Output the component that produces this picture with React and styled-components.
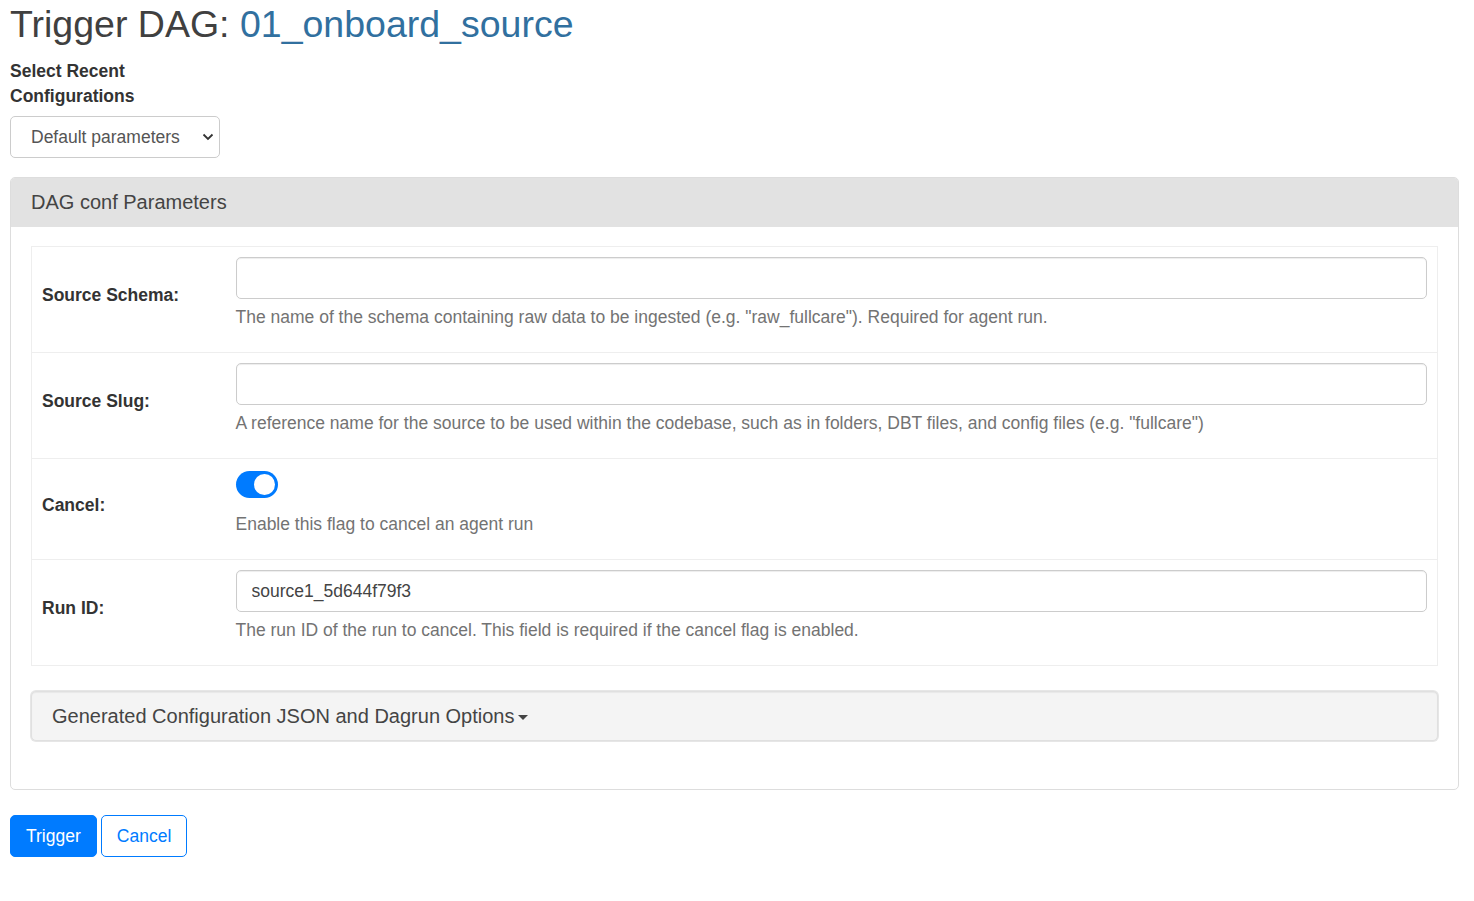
import React, { useState } from 'react'
import styled, { createGlobalStyle } from 'styled-components'

const GlobalStyle = createGlobalStyle`
  html, body {
    margin: 0;
    padding: 0;
    background: #fff;
  }
  body {
    font-family: "Liberation Sans", Arial, Helvetica, sans-serif;
    font-size: 17.5px;
    line-height: 25px;
    color: #333;
  }
  * { box-sizing: border-box; }
`

const params = [
  {
    id: 'source_schema',
    label: 'Source Schema:',
    kind: 'text',
    value: '',
    help: 'The name of the schema containing raw data to be ingested (e.g. "raw_fullcare"). Required for agent run.',
  },
  {
    id: 'source_slug',
    label: 'Source Slug:',
    kind: 'text',
    value: '',
    help: 'A reference name for the source to be used within the codebase, such as in folders, DBT files, and config files (e.g. "fullcare")',
  },
  {
    id: 'cancel',
    label: 'Cancel:',
    kind: 'switch',
    value: true,
    help: 'Enable this flag to cancel an agent run',
  },
  {
    id: 'run_id',
    label: 'Run ID:',
    kind: 'text',
    value: 'source1_5d644f79f3',
    help: 'The run ID of the run to cancel. This field is required if the cancel flag is enabled.',
  },
]

function Switch({ on, onToggle }) {
  return (
    <Toggle type="button" $on={on} onClick={onToggle} aria-pressed={on}>
      <Knob $on={on} />
    </Toggle>
  )
}

function ParamRow({ param }) {
  const [value, setValue] = useState(param.value)
  return (
    <tr>
      <LabelCell>
        <label htmlFor={param.id}>{param.label}</label>
      </LabelCell>
      <FieldCell>
        {param.kind === 'switch' ? (
          <Switch on={value} onToggle={() => setValue(!value)} />
        ) : (
          <TextInput id={param.id} value={value} onChange={e => setValue(e.target.value)} />
        )}
        <Help>{param.help}</Help>
      </FieldCell>
    </tr>
  )
}

export default function App() {
  return (
    <Page>
      <GlobalStyle />
      <Title>
        Trigger DAG: <DagName href="#">01_onboard_source</DagName>
      </Title>
      <RecentBox>
        <RecentLabel htmlFor="recent_configs">Select Recent Configurations</RecentLabel>
        <Select id="recent_configs" defaultValue="default">
          <option value="default">Default parameters</option>
        </Select>
      </RecentBox>

      <Panel>
        <PanelHeading>DAG conf Parameters</PanelHeading>
        <PanelBody>
          <ParamTable>
            <tbody>
              {params.map(p => (
                <ParamRow key={p.id} param={p} />
              ))}
            </tbody>
          </ParamTable>
          <Well>
            Generated Configuration JSON and Dagrun Options<Caret />
          </Well>
        </PanelBody>
      </Panel>

      <Actions>
        <Button $primary>Trigger</Button>
        <Button>Cancel</Button>
      </Actions>
    </Page>
  )
}

const Page = styled.div`
  padding: 0 15px 40px 10px;
`

const Title = styled.h2`
  margin: 0;
  padding-top: 4px;
  font-size: 37.5px;
  font-weight: 400;
  line-height: 41px;
  color: #404040;
`

const DagName = styled.a`
  color: #31709f;
  text-decoration: none;
`

const RecentBox = styled.div`
  width: 210px;
  margin-top: 14px;
  display: flex;
  flex-direction: column;
`

const RecentLabel = styled.label`
  font-weight: 700;
  line-height: 25px;
  margin-bottom: 7px;
`

const Select = styled.select`
  appearance: none;
  width: 210px;
  height: 42px;
  padding: 0 30px 0 20px;
  font-family: inherit;
  font-size: 17.5px;
  color: #555;
  background: #fff url("data:image/svg+xml,%3Csvg xmlns='http://www.w3.org/2000/svg' width='12' height='8' viewBox='0 0 12 8'%3E%3Cpath d='M1.5 1.5l4.5 4.5 4.5-4.5' fill='none' stroke='%23333' stroke-width='1.8'/%3E%3C/svg%3E") no-repeat right 5px center;
  border: 1px solid #ccc;
  border-radius: 5px;
`

const Panel = styled.section`
  margin-top: 19px;
  border: 1px solid #ddd;
  border-radius: 5px;
  background: #fff;
  overflow: hidden;
`

const PanelHeading = styled.div`
  height: 49px;
  padding: 0 20px;
  display: flex;
  align-items: center;
  background: #e2e2e2;
  font-size: 20px;
  color: #444;
`

const PanelBody = styled.div`
  padding: 19px 20px 48px;
`

const ParamTable = styled.table`
  width: 100%;
  border-collapse: collapse;
  border: 1px solid #eee;
  margin-bottom: 25px;

  tr + tr td {
    border-top: 1px solid #eee;
  }
`

const LabelCell = styled.td`
  width: 194px;
  padding: 10px 10px 18px;
  vertical-align: middle;
  font-weight: 700;
  color: #333;
`

const FieldCell = styled.td`
  padding: 10px;
  vertical-align: top;
`

const TextInput = styled.input`
  display: block;
  width: 100%;
  height: 42px;
  padding: 0 15px;
  font-family: inherit;
  font-size: 17.5px;
  color: #444;
  border: 1px solid #ccc;
  border-radius: 5px;
  box-shadow: inset 0 1px 1px rgba(0, 0, 0, 0.075);
  outline: none;
`

const Help = styled.p`
  margin: 6px 0 12px;
  color: #737373;
`

const Toggle = styled.button`
  display: block;
  width: 42px;
  height: 27px;
  margin: 2px 0 14px;
  padding: 0;
  border: none;
  border-radius: 14px;
  background: ${p => (p.$on ? '#007bff' : '#ccc')};
  position: relative;
  cursor: pointer;
`

const Knob = styled.span`
  position: absolute;
  top: 3px;
  left: ${p => (p.$on ? '18px' : '3px')};
  width: 21px;
  height: 21px;
  border-radius: 50%;
  background: #fff;
`

const Well = styled.div`
  height: 50px;
  padding: 0 20px;
  display: flex;
  align-items: center;
  background: #f4f4f4;
  border: 1px solid #e0e0e0;
  border-radius: 5px;
  box-shadow: inset 0 1px 1px rgba(0, 0, 0, 0.05), 0 0 0 1px #e6e6e6;
  font-size: 20px;
  color: #444;
  cursor: pointer;
`

const Caret = styled.span`
  display: inline-block;
  width: 0;
  height: 0;
  margin-left: 3px;
  margin-top: 3px;
  border-top: 5px solid #444;
  border-left: 5px solid transparent;
  border-right: 5px solid transparent;
`

const Actions = styled.div`
  margin-top: 25px;
  display: flex;
  gap: 4px;
`

const Button = styled.button`
  height: 42px;
  padding: 0 15px;
  font-family: inherit;
  font-size: 17.5px;
  border-radius: 5px;
  border: 1px solid #007bff;
  background: ${p => (p.$primary ? '#007bff' : '#fff')};
  color: ${p => (p.$primary ? '#fff' : '#007bff')};
  cursor: pointer;
`
